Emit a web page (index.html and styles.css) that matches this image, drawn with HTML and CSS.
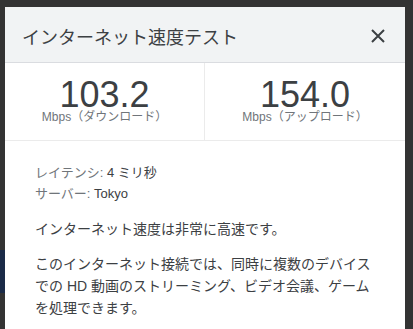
FILE: index.html
```
<!DOCTYPE html>
<html lang="ja">
<head>
    <meta charset="UTF-8">
    <meta name="viewport" content="width=device-width, initial-scale=1.0">
    <title>インターネット速度テスト</title>
    <link rel="stylesheet" href="styles.css">
</head>
<body>
    <div class="backdrop-mark"></div>
    <div class="dialog">
        <div class="dialog-header">
            <span class="dialog-title">インターネット速度テスト</span>
            <svg class="close-icon" width="14" height="14" viewBox="0 0 14 14">
                <path d="M1 1 L13 13 M13 1 L1 13" stroke="#3c4043" stroke-width="2" fill="none"/>
            </svg>
        </div>

        <div class="speeds">
            <div class="speed">
                <div class="speed-value">103.2</div>
                <div class="speed-label">Mbps（ダウンロード）</div>
            </div>
            <div class="speed">
                <div class="speed-value">154.0</div>
                <div class="speed-label">Mbps（アップロード）</div>
            </div>
        </div>

        <div class="details">
            <div class="meta"><span class="meta-key">レイテンシ:</span> 4 ミリ秒</div>
            <div class="meta"><span class="meta-key">サーバー:</span> Tokyo</div>
            <p class="summary">インターネット速度は非常に高速です。</p>
            <p class="explain">このインターネット接続では、同時に複数のデバイスでの HD 動画のストリーミング、ビデオ会議、ゲームを処理できます。</p>
        </div>
    </div>
</body>
</html>
```

FILE: styles.css
```
body {
    margin: 0;
    background-color: #333333;
    font-family: "Liberation Sans", "Noto Sans CJK JP", sans-serif;
    overflow: hidden;
}
.backdrop-mark {
    position: absolute;
    left: 0;
    top: 250px;
    width: 5px;
    height: 43px;
    background-color: #1b2b48;
}
.dialog {
    position: relative;
    margin: 7px 0 0 5px;
    width: 400px;
    background-color: #fff;
    color: #3c4043;
}
.dialog-header {
    height: 56px;
    display: flex;
    align-items: center;
    justify-content: space-between;
    padding: 2px 20px 0 17px;
    box-sizing: border-box;
    background-color: #f1f3f4;
    border-bottom: 1px solid #dadce0;
}
.dialog-title {
    font-size: 18px;
    color: #3c4043;
}
.speeds {
    display: grid;
    grid-template-columns: 199px 1fr;
    border-bottom: 1px solid #ebebeb;
}
.speed {
    text-align: center;
    padding: 17px 0 16px 0;
}
.speed + .speed {
    border-left: 1px solid #ebebeb;
}
.speed-value {
    font-size: 36px;
    line-height: 30px;
    color: #3c4043;
}
.speed-label {
    font-size: 12px;
    line-height: 14px;
    color: #70757a;
}
.details {
    padding: 21px 30px 20px 30px;
    font-size: 13px;
    line-height: 21px;
}
.meta {
    color: #3c4043;
}
.meta-key {
    color: #70757a;
}
.summary {
    margin: 14px 0 0 0;
    font-size: 14px;
    line-height: 22px;
}
.explain {
    margin: 13px 0 0 0;
    font-size: 14px;
    line-height: 22px;
}
```
